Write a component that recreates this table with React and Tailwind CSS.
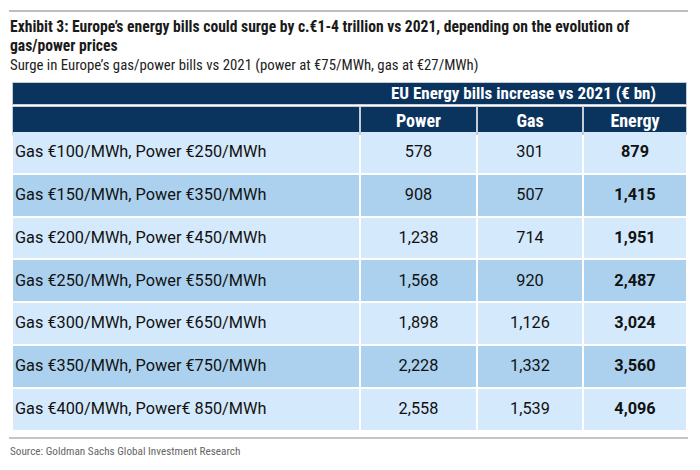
import React from 'react';

const rows = [
  { label: 'Gas €100/MWh, Power €250/MWh', power: '578', gas: '301', energy: '879' },
  { label: 'Gas €150/MWh, Power €350/MWh', power: '908', gas: '507', energy: '1,415' },
  { label: 'Gas €200/MWh, Power €450/MWh', power: '1,238', gas: '714', energy: '1,951' },
  { label: 'Gas €250/MWh, Power €550/MWh', power: '1,568', gas: '920', energy: '2,487' },
  { label: 'Gas €300/MWh, Power €650/MWh', power: '1,898', gas: '1,126', energy: '3,024' },
  { label: 'Gas €350/MWh, Power €750/MWh', power: '2,228', gas: '1,332', energy: '3,560' },
  { label: 'Gas €400/MWh, Power€ 850/MWh', power: '2,558', gas: '1,539', energy: '4,096' },
];

const cols = 'grid grid-cols-[346px_115px_104px_102px] gap-x-[2px]';

export default function App() {
  return (
    <div className="w-[700px] h-[470px] bg-white pt-[10px] px-[9px] text-[#111]">
      <div className="h-[2px] w-[679px] bg-[#bdbdbd]" />

      {/* Title */}
      <div className="mt-[6px] pl-[1px] font-['Roboto_Condensed',sans-serif] font-bold text-[15.6px] leading-[19px] text-[#1a1a1a]">
        Exhibit 3: Europe’s energy bills could surge by c.€1-4 trillion vs 2021, depending on the evolution of
        <br />
        gas/power prices
      </div>
      <div className="pl-[1px] font-['Roboto_Condensed',sans-serif] text-[14.8px] leading-[18px] text-[#222]">
        Surge in Europe’s gas/power bills vs 2021 (power at €75/MWh, gas at €27/MWh)
      </div>

      {/* Table */}
      <div className="mt-[9px] ml-[4px] w-[673px]">
        <div className="h-[21px] bg-[#0a335e] outline outline-1 outline-[#c5ccd6] flex items-center pl-[348px] font-['Roboto_Condensed',sans-serif] font-bold text-[17px] text-white">
          <span className="flex-1 text-center">EU Energy bills increase vs 2021 (€ bn)</span>
        </div>
        <div className={`${cols} mt-[3px] h-[22px] font-['Roboto_Condensed',sans-serif] font-bold text-[18px] text-white`}>
          <div className="bg-[#0a335e] outline outline-1 outline-[#c5ccd6]" />
          <div className="bg-[#0a335e] outline outline-1 outline-[#c5ccd6] flex items-center justify-center">Power</div>
          <div className="bg-[#0a335e] outline outline-1 outline-[#c5ccd6] flex items-center justify-center">Gas</div>
          <div className="bg-[#0a335e] outline outline-1 outline-[#c5ccd6] flex items-center justify-center">Energy</div>
        </div>

        <div className="mt-[3px] flex flex-col gap-y-[2px] font-['Roboto',sans-serif] text-[16.3px] text-[#111]">
          {rows.map((r, i) => {
            const bg = i % 2 === 0 ? 'bg-[#d4e9fb]' : 'bg-[#abd1ef]';
            return (
              <div key={r.label} className={`${cols} h-[40.8px]`}>
                <div className={`${bg} flex items-center pl-[2px]`}>{r.label}</div>
                <div className={`${bg} flex items-center justify-center`}>{r.power}</div>
                <div className={`${bg} flex items-center justify-center`}>{r.gas}</div>
                <div className={`${bg} flex items-center justify-center font-bold`}>{r.energy}</div>
              </div>
            );
          })}
        </div>
      </div>

      <div className="mt-[7px] h-[2px] w-[679px] bg-[#c4c4c4]" />
      <div className="mt-[6px] pl-[1px] font-['Roboto_Condensed',sans-serif] text-[11.2px] leading-[14px] text-[#666]">
        Source: Goldman Sachs Global Investment Research
      </div>
    </div>
  );
}
